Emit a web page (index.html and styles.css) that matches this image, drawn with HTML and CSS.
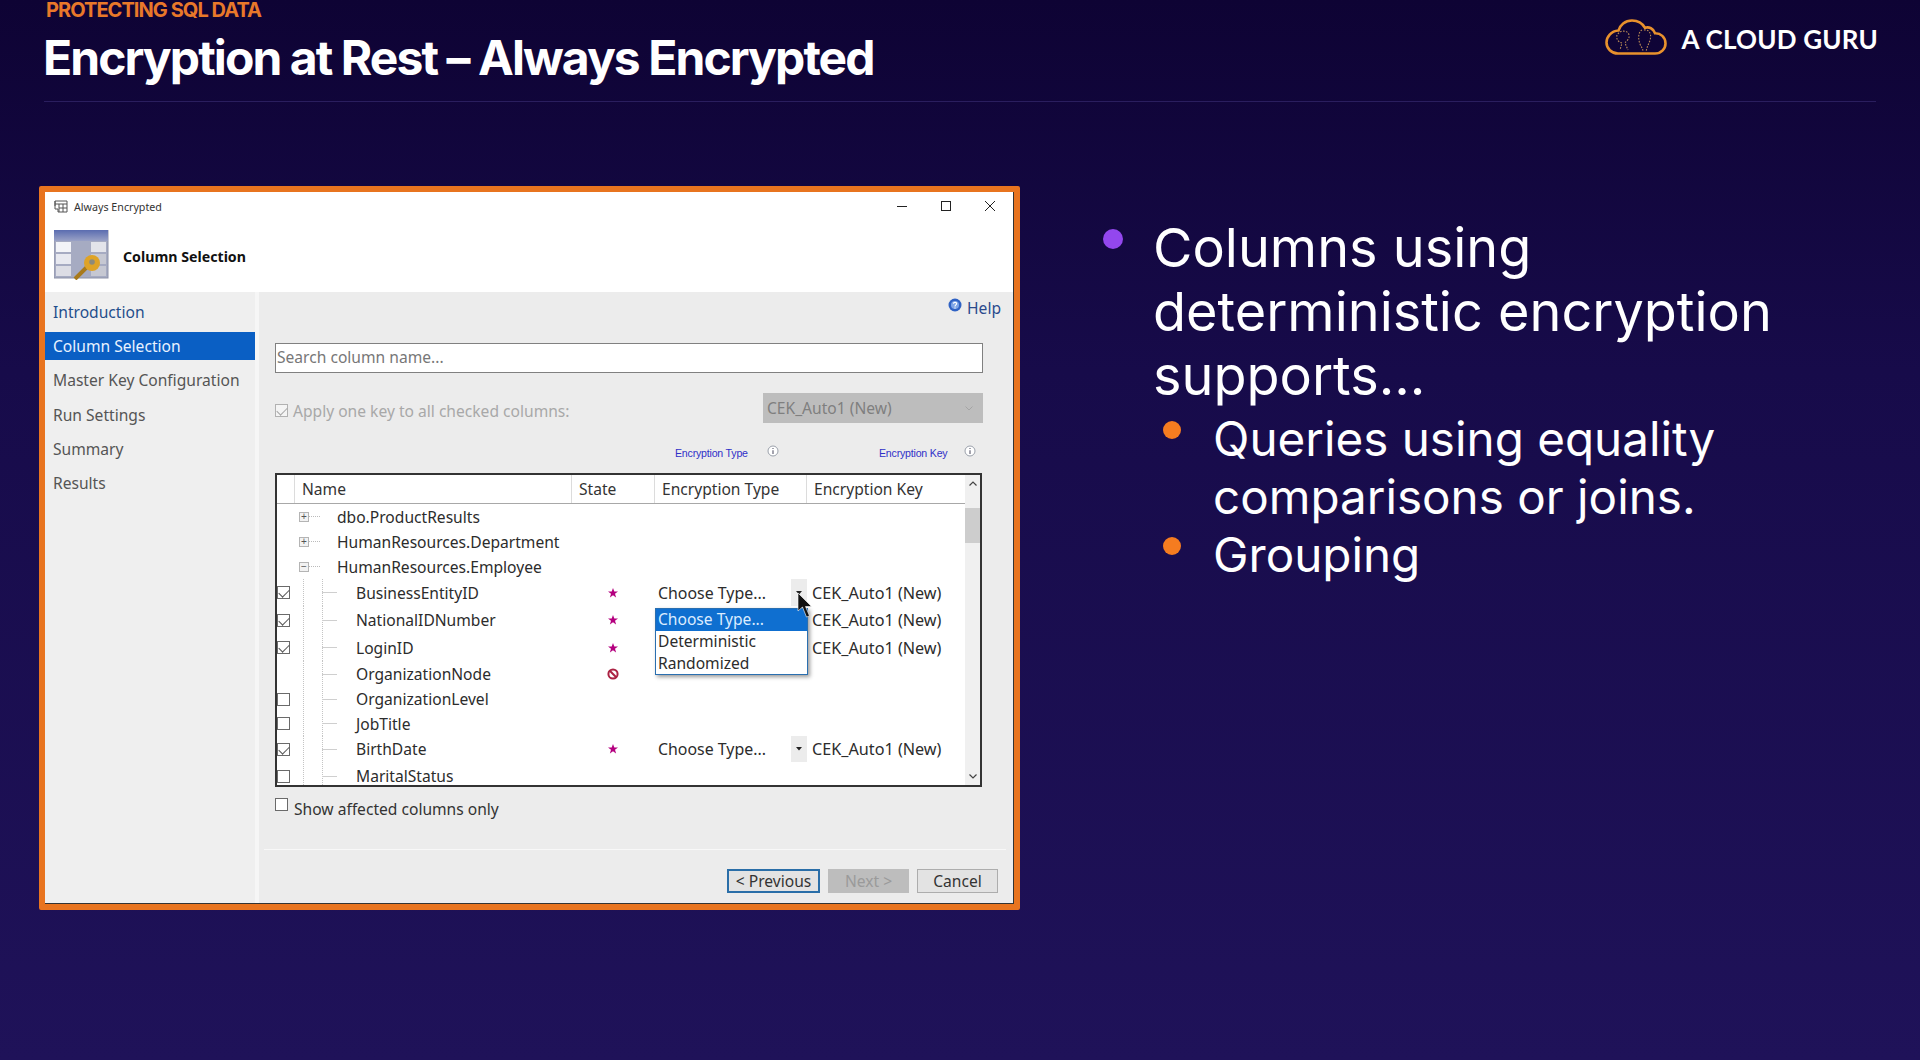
FILE: index.html
```html
<!DOCTYPE html>
<html lang="en">
<head>
  <meta charset="UTF-8"/>
  <title>Encryption at Rest – Always Encrypted</title>
  <meta name="viewport" content="width=device-width, initial-scale=1.0"/>
  <link rel="stylesheet" href="styles.css">
</head>
<body>
<div class="slide">

  <header class="top">
    <div class="headings">
      <div class="eyebrow">PROTECTING SQL DATA</div>
      <h1>Encryption at Rest – Always Encrypted</h1>
    </div>
    <div class="brand">
      <svg class="cloud" viewBox="0 0 62 36" width="62" height="36">
        <path d="M13 34.5H50C56.5 34.5 60.5 29.5 60.5 24.5C60.5 18 55.5 14 50 14.2C48.5 9.5 44 7.5 40 8.8C37 3.5 31.5 1.5 27 1.5C20 1.5 15 6 13.5 11.5C6 12 1.5 18 1.5 23.5C1.5 29.5 6.5 34.5 13 34.5Z" fill="none" stroke="#e8912d" stroke-width="2.6"/>
        <path d="M13 15C15 11 23 11 24 16C25 20 21 22 20 24L23 31M12 16C11 20 13 23 17 24L15 31" fill="none" stroke="#b98a55" stroke-width="1.1" stroke-dasharray="1.6 1.4"/>
        <path d="M39 11C44 10 47 15 45 21C44 25 42 27 41 33M37 11C33 13 33 20 35 25C36 28 38 29 38 33" fill="none" stroke="#b98a55" stroke-width="1.1" stroke-dasharray="1.6 1.4"/>
      </svg>
      <span class="brand-name">A CLOUD GURU</span>
    </div>
  </header>

  <main class="content">
    <div class="frame">
      <div class="dialog">

        <div class="titlebar">
          <svg class="title-icon" viewBox="0 0 14 13" width="14" height="13">
            <path d="M1 1H13V12H4V9H1ZM1 4H13M5 4V12M9 4V12M5 8H13M1 1V6" fill="none" stroke="#555" stroke-width="1"/>
          </svg>
          <span class="title-text">Always Encrypted</span>
          <div class="win-btns">
            <svg viewBox="0 0 10 10" width="10" height="10"><path d="M0 5.5H10" stroke="#222" stroke-width="1"/></svg>
            <svg viewBox="0 0 10 10" width="10" height="10"><rect x=".5" y=".5" width="9" height="9" fill="none" stroke="#222"/></svg>
            <svg viewBox="0 0 10 10" width="10" height="10"><path d="M0 0L10 10M10 0L0 10" stroke="#222" stroke-width="1"/></svg>
          </div>
        </div>

        <div class="wizard-head">
          <svg class="wizard-icon" viewBox="0 0 56 50" width="56" height="50">
            <defs>
              <linearGradient id="tableTop" x1="0" y1="0" x2="0" y2="1">
                <stop offset="0" stop-color="#5a6cb0"/>
                <stop offset="1" stop-color="#9aa2c6"/>
              </linearGradient>
            </defs>
            <rect x="0" y="0" width="54" height="48" fill="#a6abc2" stroke="#8d92a8"/>
            <rect x="0" y="0" width="54" height="11" fill="url(#tableTop)"/>
            <rect x="2" y="12" width="15" height="10" fill="#f3f4f8"/>
            <rect x="2" y="24" width="15" height="10" fill="#e8e9f0"/>
            <rect x="2" y="36" width="15" height="10" fill="#dcdde5"/>
            <rect x="37" y="12" width="15" height="10" fill="#e3e4ea"/>
            <rect x="37" y="24" width="15" height="10" fill="#c6c8d2"/>
            <rect x="37" y="36" width="15" height="10" fill="#c6c8d2"/>
            <path d="M21 49L33 37" stroke="#a87a1c" stroke-width="4"/>
            <circle cx="38" cy="33" r="8" fill="#dfa326"/>
            <circle cx="38" cy="32" r="2.8" fill="#8d8a7a"/>
          </svg>
          <span class="wizard-title">Column Selection</span>
        </div>

        <div class="wizard-body">
          <nav class="steps">
            <div class="step step-link">Introduction</div>
            <div class="step step-on">Column Selection</div>
            <div class="step">Master Key Configuration</div>
            <div class="step">Run Settings</div>
            <div class="step">Summary</div>
            <div class="step">Results</div>
          </nav>

          <section class="pane">
            <div class="help-row">
              <svg class="help-icon" viewBox="0 0 14 14" width="14" height="14">
                <circle cx="7" cy="7" r="6.5" fill="#2f62c4"/>
                <circle cx="7" cy="7" r="4" fill="#7fa5e6"/>
                <path d="M5.4 5.6C5.6 3.8 8.8 4 8.6 5.8C8.5 7 7 6.8 7 8.4M7 9.4V10.6" fill="none" stroke="#fff" stroke-width="1.2"/>
              </svg>
              <span class="help-text">Help</span>
            </div>

            <div class="search">Search column name...</div>

            <div class="apply-row">
              <span class="check check-off-tone on"></span>
              <span class="apply-text">Apply one key to all checked columns:</span>
              <div class="combo">CEK_Auto1 (New)
                <svg viewBox="0 0 8 5" width="8" height="5"><path d="M.5 .5L4 4L7.5 .5" fill="none" stroke="#a4a4a4"/></svg>
              </div>
            </div>

            <div class="mini-row">
              <span class="mini mini-type">Encryption Type</span>
              <svg class="info" viewBox="0 0 12 12" width="12" height="12"><circle cx="6" cy="6" r="5" fill="#fff" stroke="#9aa0aa"/><path d="M6 3V4M6 5.2V9" stroke="#667" stroke-width="1.2"/></svg>
              <span class="mini mini-key">Encryption Key</span>
              <svg class="info" viewBox="0 0 12 12" width="12" height="12"><circle cx="6" cy="6" r="5" fill="#fff" stroke="#9aa0aa"/><path d="M6 3V4M6 5.2V9" stroke="#667" stroke-width="1.2"/></svg>
            </div>

            <div class="grid-box">
              <div class="grid-main">
                <div class="grid-head">
                  <span></span>
                  <span class="cell-head">Name</span>
                  <span class="cell-head">State</span>
                  <span class="cell-head">Encryption Type</span>
                  <span class="cell-head">Encryption Key</span>
                </div>

                <div class="row"><span></span><span class="name parent"><i class="node">+</i>dbo.ProductResults</span></div>
                <div class="row"><span></span><span class="name parent"><i class="node">+</i>HumanResources.Department</span></div>
                <div class="row"><span></span><span class="name parent open"><i class="node">−</i>HumanResources.Employee</span></div>

                <div class="row row-27">
                  <span class="check on"></span><span class="name leaf">BusinessEntityID</span>
                  <span class="state"><svg class="star" viewBox="0 0 10 10" width="10" height="10"><path d="M5 0L6.3 3.5H10L7 5.8L8.1 9.5L5 7.3L1.9 9.5L3 5.8L0 3.5H3.7Z"/></svg></span>
                  <span class="type">Choose Type...<i class="drop"><svg viewBox="0 0 6 4" width="6" height="4"><path d="M0 0H6L3 3.5Z" fill="#222"/></svg></i></span>
                  <span class="key">CEK_Auto1 (New)</span>
                </div>
                <div class="row row-28">
                  <span class="check on"></span><span class="name leaf">NationalIDNumber</span>
                  <span class="state"><svg class="star" viewBox="0 0 10 10" width="10" height="10"><path d="M5 0L6.3 3.5H10L7 5.8L8.1 9.5L5 7.3L1.9 9.5L3 5.8L0 3.5H3.7Z"/></svg></span>
                  <span></span>
                  <span class="key">CEK_Auto1 (New)</span>
                </div>
                <div class="row row-27">
                  <span class="check on"></span><span class="name leaf">LoginID</span>
                  <span class="state"><svg class="star" viewBox="0 0 10 10" width="10" height="10"><path d="M5 0L6.3 3.5H10L7 5.8L8.1 9.5L5 7.3L1.9 9.5L3 5.8L0 3.5H3.7Z"/></svg></span>
                  <span></span>
                  <span class="key">CEK_Auto1 (New)</span>
                </div>
                <div class="row row-26">
                  <span></span><span class="name leaf">OrganizationNode</span>
                  <span class="state"><svg viewBox="0 0 12 12" width="12" height="12"><circle cx="6" cy="6" r="4.6" fill="#fff" stroke="#ab2243" stroke-width="2"/><path d="M2.8 2.8L9.2 9.2" stroke="#ab2243" stroke-width="2"/></svg></span>
                </div>
                <div class="row row-24"><span class="check"></span><span class="name leaf">OrganizationLevel</span></div>
                <div class="row"><span class="check"></span><span class="name leaf">JobTitle</span></div>
                <div class="row row-26">
                  <span class="check on"></span><span class="name leaf">BirthDate</span>
                  <span class="state"><svg class="star" viewBox="0 0 10 10" width="10" height="10"><path d="M5 0L6.3 3.5H10L7 5.8L8.1 9.5L5 7.3L1.9 9.5L3 5.8L0 3.5H3.7Z"/></svg></span>
                  <span class="type">Choose Type...<i class="drop"><svg viewBox="0 0 6 4" width="6" height="4"><path d="M0 0H6L3 3.5Z" fill="#222"/></svg></i></span>
                  <span class="key">CEK_Auto1 (New)</span>
                </div>
                <div class="row row-28"><span class="check"></span><span class="name leaf">MaritalStatus</span></div>
              </div>

              <div class="scrollbar">
                <svg viewBox="0 0 8 5" width="8" height="5"><path d="M.5 4.5L4 1L7.5 4.5" fill="none" stroke="#444" stroke-width="1.2"/></svg>
                <div class="thumb"></div>
                <svg class="scroll-down" viewBox="0 0 8 5" width="8" height="5"><path d="M.5 .5L4 4L7.5 .5" fill="none" stroke="#444" stroke-width="1.2"/></svg>
              </div>

              <ul class="menu">
                <li class="menu-on">Choose Type...</li>
                <li>Deterministic</li>
                <li>Randomized</li>
              </ul>

              <svg class="pointer" viewBox="0 0 16 26" width="16" height="26">
                <path d="M1 1V19L5.5 15L9.5 25L12.5 24L8.5 14.5H14.5Z" fill="#111" stroke="#fff" stroke-width=".6"/>
              </svg>
            </div>

            <label class="affected">
              <span class="check"></span>
              <span>Show affected columns only</span>
            </label>

            <div class="footer">
              <button class="btn btn-focus">&lt; Previous</button>
              <button class="btn btn-off">Next &gt;</button>
              <button class="btn">Cancel</button>
            </div>
          </section>
        </div>

      </div>
    </div>

    <ul class="points">
      <li class="point">
        <span class="dot dot-purple"></span>
        <span>Columns using deterministic encryption supports...</span>
      </li>
      <li class="point point-sub point-first">
        <span class="dot dot-orange"></span>
        <span>Queries using equality comparisons or joins.</span>
      </li>
      <li class="point point-sub">
        <span class="dot dot-orange"></span>
        <span>Grouping</span>
      </li>
    </ul>
  </main>

</div>
</body>
</html>
```

FILE: styles.css
```css
* {
  box-sizing: border-box;
}
body {
  margin: 0;
  font-family: Inter, "Liberation Sans", sans-serif;
  background: #150845;
}
ul {
  list-style: none;
  margin: 0;
  padding: 0;
}
.slide {
  width: 1920px;
  height: 1060px;
  overflow: hidden;
  background: linear-gradient(180deg, #0e0334 0%, #170b4a 35%, #1f1259 100%);
  color: #fff;
}

/* header */
.top {
  height: 102px;
  margin: 0 44px;
  display: flex;
  justify-content: space-between;
  border-bottom: 1px solid #2a1e5e;
}
.eyebrow {
  color: #e8782a;
  font-size: 20px;
  font-weight: 700;
  line-height: 20px;
  letter-spacing: -0.95px;
  margin-left: 2px;
}
h1 {
  margin: 12px 0 0 -1px;
  font-size: 48px;
  line-height: 52px;
  font-weight: 700;
  letter-spacing: -1.93px;
}
.brand {
  display: flex;
  align-items: center;
  gap: 15px;
  height: 74px;
  margin-right: -2px;
}
.brand-name {
  margin-top: 4px;
  font-family: Lato, sans-serif;
  font-weight: 700;
  font-size: 26px;
  letter-spacing: 0.2px;
}

/* main area */
.content {
  display: flex;
  padding: 84px 0 0 39px;
}
.frame {
  width: 981px;
  height: 724px;
  border: 6px solid #e8741f;
  border-radius: 2px;
  background: #fff;
}
.dialog {
  height: 100%;
  display: flex;
  flex-direction: column;
  border-right: 1px solid #333;
  border-bottom: 1px solid #333;
  color: #333;
  font-family: "Noto Sans", sans-serif;
  font-size: 15.6px;
}
.titlebar {
  height: 28px;
  display: flex;
  align-items: center;
  padding: 0 18px 0 9px;
  flex: none;
}
.title-icon {
  margin-right: 6px;
}
.title-text {
  font-size: 10.7px;
  color: #333;
  padding-top: 1px;
}
.win-btns {
  margin-left: auto;
  display: flex;
  gap: 34px;
}
.wizard-head {
  height: 72px;
  flex: none;
  display: flex;
  align-items: center;
  padding: 0 0 2px 9px;
}
.wizard-title {
  margin-left: 13px;
  margin-top: 2px;
  font-weight: 700;
  font-size: 14.2px;
  color: #111;
}
.wizard-body {
  flex: 1;
  display: flex;
  min-height: 0;
}

/* left steps */
.steps {
  width: 214px;
  flex: none;
  background: #efefef;
  border-right: 4px solid #f6f6f6;
  padding-top: 3px;
}
.step {
  height: 34.3px;
  display: flex;
  align-items: center;
  padding: 0 0 1px 8px;
  color: #555;
}
.step-link {
  color: #1f4e8c;
}
.step-on {
  height: 28px;
  margin: 3px 0 3.3px;
  background: #0a5fc4;
  color: #e8f2ff;
}

/* right pane */
.pane {
  flex: 1;
  background: #ececec;
  padding: 0 30px 0 16px;
  display: flex;
  flex-direction: column;
}
.help-row {
  height: 51px;
  display: flex;
  justify-content: flex-end;
  align-items: flex-start;
  padding: 5px 0 0;
  margin-right: -18px;
}
.help-icon {
  margin-top: 1px;
}
.help-text {
  color: #2a4a8c;
  margin: 0 0 0 5px;
}
.search {
  height: 30px;
  background: #fff;
  border: 1px solid #808080;
  padding-left: 1px;
  line-height: 27px;
  color: #777;
}
.apply-row {
  height: 30px;
  margin-top: 20px;
  display: flex;
  align-items: center;
}
.apply-text {
  margin-left: 5px;
  color: #a8a8a8;
  padding-top: 5px;
}
.check-off-tone {
  margin-top: 5px;
  opacity: 0.45;
}
.combo {
  margin-left: auto;
  width: 220px;
  height: 30px;
  background: #bdbdbd;
  color: #7f7f7f;
  padding: 0 10px 0 4px;
  line-height: 28px;
  display: flex;
  justify-content: space-between;
  align-items: center;
}
.mini-row {
  height: 50px;
  display: flex;
  align-items: center;
  padding: 9px 0 0 400px;
}
.mini {
  font-family: "Liberation Sans", sans-serif;
  font-size: 10.6px;
  color: #3030c8;
  letter-spacing: -0.2px;
}
.mini-type {
  width: 92px;
}
.mini-key {
  width: 85px;
  margin-left: 100px;
}
.info {
  margin-top: -3px;
}

/* column grid */
.grid-box {
  position: relative;
  width: 707px;
  height: 314px;
  display: flex;
  border: 2px solid #333;
  background: #fff;
  overflow: hidden;
  color: #2c2c2c;
}
.grid-main {
  width: 688px;
  flex: none;
}
.grid-head,
.row {
  display: grid;
  grid-template-columns: 17px 277px 83px 152px 159px;
  align-items: center;
}
.grid-head {
  height: 29px;
  border-bottom: 1px solid #a8a8a8;
}
.cell-head {
  height: 100%;
  display: flex;
  align-items: center;
  padding-left: 7px;
  border-left: 1px solid #dcdcdc;
  color: #333;
}
.row {
  height: 25px;
}
.row-24 { height: 24px; }
.row-26 { height: 26px; }
.row-27 { height: 27px; }
.row-28 { height: 28px; }
.name {
  position: relative;
  height: 100%;
  display: flex;
  align-items: center;
  white-space: nowrap;
}
.parent {
  padding-left: 43px;
}
.leaf {
  padding-left: 62px;
  background:
    linear-gradient(#cfcfcf, #cfcfcf) 28px 50% / 15px 1px no-repeat,
    repeating-linear-gradient(180deg, #c4c4c4 0 1px, transparent 1px 2px) 9px 0 / 1px 100% no-repeat,
    repeating-linear-gradient(180deg, #c4c4c4 0 1px, transparent 1px 2px) 28px 0 / 1px 100% no-repeat;
}
.node {
  position: absolute;
  left: 5px;
  top: 50%;
  width: 10px;
  height: 10px;
  margin-top: -5px;
  border: 1px solid #b4b4b4;
  background: #f2f2f2;
  color: #555;
  font: 10px/8px "Liberation Sans", sans-serif;
  text-align: center;
}
.node::after {
  content: "";
  position: absolute;
  left: 9px;
  top: 3px;
  width: 11px;
  border-top: 1px dotted #bbb;
}
.check {
  position: relative;
  width: 13px;
  height: 13px;
  margin-left: 0;
  flex: none;
  background: #fff;
  border: 1px solid #6a6a6a;
}
.check.on::after {
  content: "";
  position: absolute;
  left: 3px;
  top: 0;
  width: 5px;
  height: 9px;
  border-right: 1px solid #555;
  border-bottom: 1px solid #555;
  transform: rotate(45deg);
}
.state {
  display: flex;
  justify-content: center;
}
.star {
  fill: #b4007f;
}
.type {
  position: relative;
  height: 100%;
  display: flex;
  align-items: center;
  padding-left: 4px;
  font-size: 15.9px;
}
.drop {
  position: absolute;
  right: -1px;
  top: 0;
  width: 16px;
  height: 100%;
  display: flex;
  align-items: center;
  justify-content: center;
  background: #ececec;
}
.key {
  padding-left: 6px;
  white-space: nowrap;
  font-size: 16.2px;
}
.scrollbar {
  position: relative;
  flex: 1;
  background: #f0f0f0;
  display: flex;
  flex-direction: column;
  align-items: center;
  padding-top: 6px;
}
.thumb {
  width: 100%;
  height: 35px;
  margin-top: 22px;
  background: #cdcdcd;
}
.scroll-down {
  margin-top: auto;
  margin-bottom: 6px;
}
.menu {
  position: absolute;
  left: 378px;
  top: 133px;
  width: 153px;
  height: 67px;
  background: #fff;
  border: 1px solid #2a6fb0;
  box-shadow: 2px 2px 4px rgba(0, 0, 0, 0.4);
}
.menu li {
  height: 21.5px;
  line-height: 21px;
  padding-left: 2px;
}
.menu .menu-on {
  height: 22px;
  background: #0f6fd0;
  color: #dcecff;
}
.pointer {
  position: absolute;
  left: 520px;
  top: 117px;
}
.affected {
  display: flex;
  align-items: flex-start;
  gap: 6px;
  height: 62px;
  padding-top: 11px;
  color: #333;
}
.footer {
  flex: 1;
  margin: 0 -23px 0 -11px;
  border-top: 1px solid #f8f8f8;
  display: flex;
  justify-content: flex-end;
  gap: 8px;
  padding: 19px 8px 0 0;
}
.btn {
  width: 81px;
  height: 24px;
  padding: 0;
  font: 15.6px/20px "Noto Sans", sans-serif;
  color: #333;
  background: #e3e3e3;
  border: 1px solid #adadad;
}
.btn-focus {
  width: 93px;
  border: 2px solid #2a6ea8;
}
.btn-off {
  background: #bdbdbd;
  border-color: #bdbdbd;
  color: #9a9a9a;
}

/* bullet list */
.points {
  margin: 30px 0 0 83px;
  width: 720px;
}
.point {
  display: flex;
  gap: 30px;
  font-size: 54px;
  line-height: 64px;
}
.point-sub {
  margin-left: 60px;
  gap: 32px;
  font-size: 47.6px;
  line-height: 58px;
}
.point-first {
  margin-top: 2px;
}
.dot {
  flex: none;
  border-radius: 50%;
  margin-top: 13px;
}
.dot-purple {
  width: 20px;
  height: 20px;
  background: #9347ee;
}
.dot-orange {
  width: 18px;
  height: 18px;
  background: #f57c20;
  margin-top: 11px;
}
```
